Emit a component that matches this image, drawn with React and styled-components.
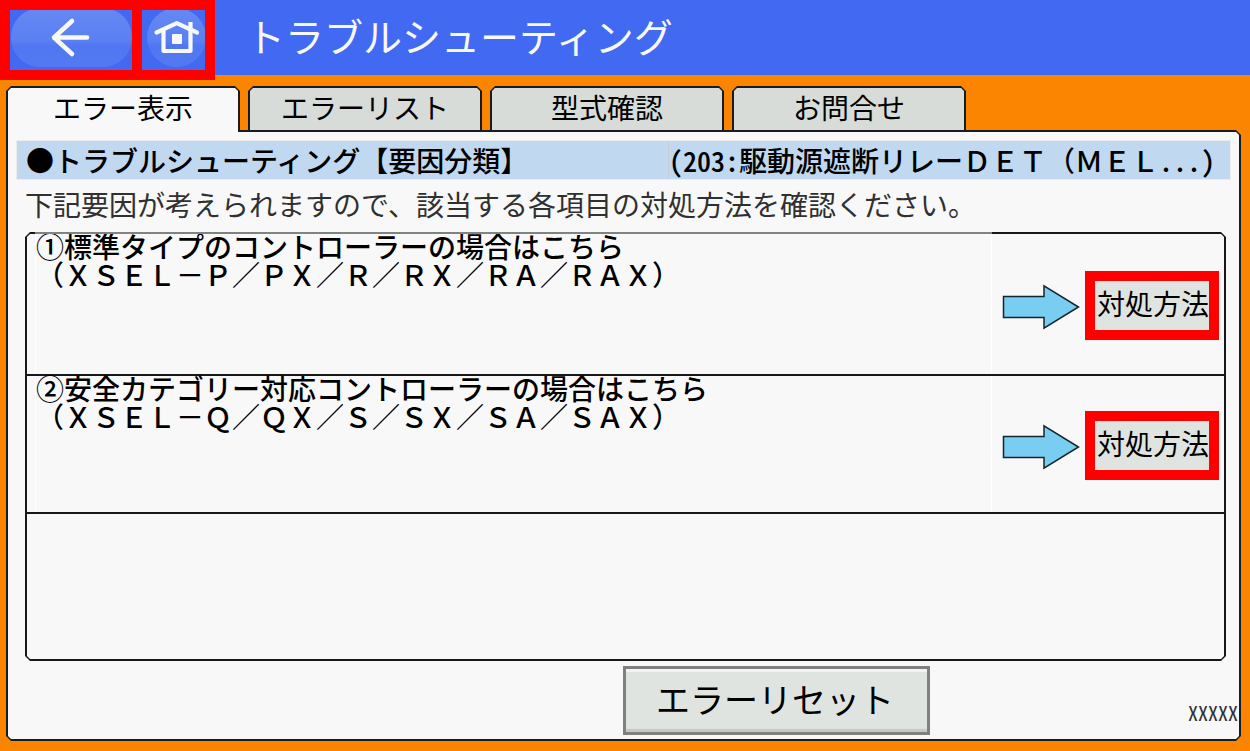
import React, { useState } from 'react';
import styled, { createGlobalStyle, css } from 'styled-components';

const TABS = ['エラー表示', 'エラーリスト', '型式確認', 'お問合せ'];

const CAUSES = [
  {
    id: 1,
    text: '①標準タイプのコントローラーの場合はこちら\n（ＸＳＥＬ－Ｐ／ＰＸ／Ｒ／ＲＸ／ＲＡ／ＲＡＸ）',
    height: 142,
  },
  {
    id: 2,
    text: '②安全カテゴリー対応コントローラーの場合はこちら\n（ＸＳＥＬ－Ｑ／ＱＸ／Ｓ／ＳＸ／ＳＡ／ＳＡＸ）',
    height: 138,
  },
];

const BackIcon = () => (
  <svg width="122" height="60" viewBox="0 0 122 60" aria-hidden="true">
    <defs>
      <linearGradient id="pill" x1="0" y1="0" x2="0" y2="1">
        <stop offset="0" stopColor="#6588f3" />
        <stop offset="0.55" stopColor="#5a80f2" />
        <stop offset="0.65" stopColor="#5076f1" />
        <stop offset="1" stopColor="#5379f2" />
      </linearGradient>
    </defs>
    <rect x="1" y="-2" width="121" height="59" rx="29" fill="url(#pill)" />
    <path
      d="M62 11 L44 27.5 L62 44 M45 27.5 H77"
      fill="none"
      stroke="#f8f8f8"
      strokeWidth="4.6"
      strokeLinecap="round"
      strokeLinejoin="round"
    />
  </svg>
);

const HomeIcon = () => (
  <svg width="63" height="60" viewBox="0 0 63 60" aria-hidden="true">
    <circle cx="34.5" cy="27.5" r="29.5" fill="url(#pill)" />
    <g fill="none" stroke="#f8f8f8" strokeWidth="4.2">
      <path d="M14.5 22.5 L34.8 13.2 L55 22.5" strokeLinecap="round" strokeLinejoin="round" />
      <path d="M21.5 20 V41 H48.5 V20" strokeLinejoin="round" />
      <path d="M48.5 12 V20" />
    </g>
    <rect x="30" y="24" width="10" height="10" rx="1" fill="#f8f8f8" />
  </svg>
);

const ArrowIcon = () => (
  <Arrow width="78" height="46" viewBox="0 0 78 46" aria-hidden="true">
    <path
      d="M1.5 12.5 H42 V1.8 L76.5 23 L42 44.2 V33.5 H1.5 Z"
      fill="#78cdf0"
      stroke="#14242c"
      strokeWidth="1.5"
    />
  </Arrow>
);

const App = () => {
  const [activeTab, setActiveTab] = useState(0);

  return (
    <Page>
      <GlobalStyle />
      <Header>
        <Nav>
          <NavButton type="button" aria-label="戻る">
            <BackIcon />
          </NavButton>
          <NavButton type="button" aria-label="ホーム">
            <HomeIcon />
          </NavButton>
        </Nav>
        <Title>トラブルシューティング</Title>
      </Header>

      <Content>
        <TabList role="tablist">
          {TABS.map((tab, idx) => (
            <Tab
              key={tab}
              type="button"
              role="tab"
              aria-selected={idx === activeTab}
              $active={idx === activeTab}
              onClick={() => setActiveTab(idx)}
            >
              <TabFace $active={idx === activeTab}>{tab}</TabFace>
            </Tab>
          ))}
        </TabList>

        <Panel>
          <PanelBody>
            <Banner>
              <BannerTitle>●トラブルシューティング【要因分類】</BannerTitle>
              <BannerError>
                <Half>(203:</Half>駆動源遮断リレーＤＥＴ（ＭＥＬ<Half>...)</Half>
              </BannerError>
            </Banner>
            <Intro>下記要因が考えられますので、該当する各項目の対処方法を確認ください。</Intro>

            <CauseFrame>
              <CauseList>
                {CAUSES.map((cause) => (
                  <CauseRow key={cause.id} $height={cause.height}>
                    <CauseText>
                      <p>{cause.text}</p>
                    </CauseText>
                    <ArrowIcon />
                    <SolutionButton type="button">対処方法</SolutionButton>
                  </CauseRow>
                ))}
              </CauseList>
            </CauseFrame>

            <Footer>
              <ResetButton type="button">エラーリセット</ResetButton>
              <ScreenCode>XXXXX</ScreenCode>
            </Footer>
          </PanelBody>
        </Panel>
      </Content>
    </Page>
  );
};

export default App;

const GlobalStyle = createGlobalStyle`
  * {
    box-sizing: border-box;
  }

  body {
    margin: 0;
    font-family: 'Noto Sans CJK JP', sans-serif;
    font-size: 28px;
    line-height: 28px;
    color: #000;
  }

  h1, h2, p {
    margin: 0;
    font-size: inherit;
    font-weight: inherit;
  }

  button {
    font: inherit;
    color: inherit;
    cursor: pointer;
  }

  svg {
    display: block;
  }
`;

// Cut corners, the border is the padding around an inner box of the same shape
const cutCorners = (cut, topLeft = cut) => css`
  clip-path: polygon(
    ${topLeft}px 0, calc(100% - ${cut}px) 0, 100% ${cut}px, 100% calc(100% - ${cut}px),
    calc(100% - ${cut}px) 100%, ${cut}px 100%, 0 calc(100% - ${cut}px), 0 ${topLeft}px
  );
`;

const cutTopCorners = (cut) => css`
  clip-path: polygon(${cut}px 0, calc(100% - ${cut}px) 0, 100% ${cut}px, 100% 100%, 0 100%, 0 ${cut}px);
`;

const Page = styled.div`
  display: flex;
  flex-direction: column;
  min-height: 100vh;
  background-color: #fb8500;
`;

const Header = styled.header`
  display: flex;
  align-items: flex-start;
  height: 75px;
  background-color: #4169f1;
`;

const Nav = styled.nav`
  display: flex;
  gap: 10px;
  padding: 10px;
  background-color: #ff0000;
`;

const NavButton = styled.button`
  display: block;
  padding: 0;
  border: none;
  background-color: #4169f1;
`;

const Title = styled.h1`
  padding-left: 31px;
  font-size: 39px;
  line-height: 70px;
  color: #f8f8f8;
  white-space: nowrap;
`;

const Content = styled.main`
  display: flex;
  flex: 1;
  flex-direction: column;
  padding: 11px 9px 10px 6px;
`;

const TabList = styled.div`
  display: flex;
  gap: 8px;
  height: 44px;
`;

// The active tab reaches over the top border of the panel
const Tab = styled.button`
  position: relative;
  z-index: ${props => (props.$active ? 1 : 0)};
  flex: 0 1 234px;
  height: ${props => (props.$active ? 46 : 44)}px;
  padding: 2px 2px 0;
  border: none;
  background-color: #181c22;
  ${cutTopCorners(5)}
`;

const TabFace = styled.span`
  display: block;
  height: 100%;
  line-height: 38px;
  background-color: ${props => (props.$active ? '#f8f8f8' : '#d7dcd8')};
  ${cutTopCorners(3)}
`;

const Panel = styled.section`
  display: flex;
  flex: 1;
  padding: 2px;
  background-color: #181c22;
  ${cutCorners(5, 0)}
`;

const PanelBody = styled.div`
  display: flex;
  flex: 1;
  flex-direction: column;
  min-width: 0;
  padding-top: 8px;
  background-color: #f8f8f8;
  ${cutCorners(3, 0)}
`;

const Banner = styled.div`
  display: grid;
  grid-template-columns: 651px 1fr;
  height: 40px;
  margin: 0 8px;
  line-height: 38px;
  font-weight: 500;
  white-space: nowrap;
  background-color: #c0d8f0;
  border: 1px solid #ececec;
`;

const BannerTitle = styled.h2`
  padding-left: 9px;
`;

const BannerError = styled.p`
  border-left: 1px solid #c8ccd0;
`;

const Half = styled.span`
  font-feature-settings: 'hwid';
`;

const Intro = styled.p`
  padding: 10px 17px 14px;
  color: #303030;
`;

// The top border is paler above the text column
const CauseFrame = styled.div`
  display: flex;
  flex: 1;
  margin: 0 13px 0 17px;
  padding: 2px;
  background:
    linear-gradient(#808480, #808480) 10px 0 / calc(100% - 244px) 2px no-repeat,
    #181818;
  ${cutCorners(5)}
`;

const CauseList = styled.div`
  flex: 1;
  min-width: 0;
  background-color: #f8f8f8;
  ${cutCorners(3)}
`;

const CauseRow = styled.div`
  display: grid;
  grid-template-columns: 1fr 78px 134px;
  column-gap: 5px;
  align-items: center;
  height: ${props => props.$height}px;
  padding: 0 5px 0 8px;
  border-bottom: 2px solid #181818;
`;

const CauseText = styled.div`
  align-self: stretch;
  margin-right: 5px;
  font-weight: 500;
  white-space: pre;
  border-left: 1px solid #fff;
  border-right: 1px solid #fff;

  p {
    margin-top: -2px;
  }
`;

const Arrow = styled.svg`
  margin-top: 6px;
`;

const SolutionButton = styled.button`
  height: 69px;
  margin-top: 2px;
  padding: 0 0 4px 2px;
  border: 10px solid #ff0000;
  white-space: nowrap;
  background-color: #dfe4e0;
`;

const Footer = styled.footer`
  display: flex;
  align-items: flex-start;
  justify-content: space-between;
  padding: 5px 1px 4px 50%;
`;

const ResetButton = styled.button`
  width: 307px;
  height: 69px;
  margin-left: -1px;
  padding: 0 2px 4px 0;
  border: 3px solid #808080;
  font-size: 34px;
  line-height: 58px;
  background-color: #dfe4e0;
  box-shadow: inset 0 3px 1px #f2f4f2, inset 0 -3px 1px #c4c8c5;
`;

const ScreenCode = styled.span`
  align-self: flex-end;
  margin-bottom: 8px;
  font-size: 20px;
  color: #303030;
  font-feature-settings: 'hwid';
`;
